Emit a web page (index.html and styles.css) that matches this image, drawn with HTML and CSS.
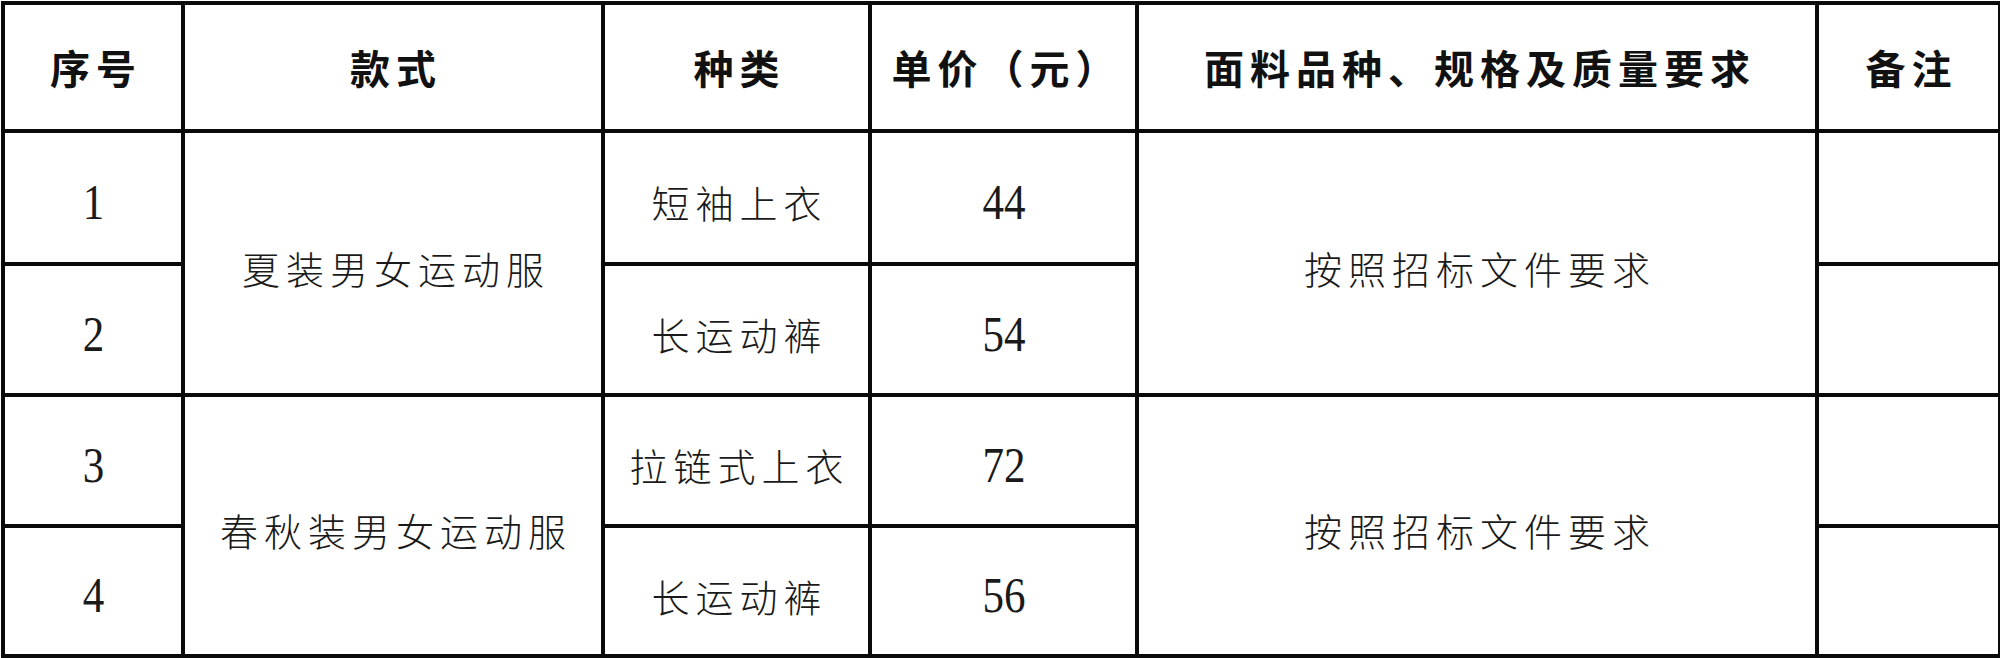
FILE: index.html
```html
<!DOCTYPE html>
<html lang="zh-CN">
<head>
<meta charset="utf-8">
<title>运动服报价表</title>
<link rel="stylesheet" href="styles.css">
</head>
<body>
<table class="sheet">
  <colgroup>
    <col class="c-no">
    <col class="c-style">
    <col class="c-kind">
    <col class="c-price">
    <col class="c-req">
    <col class="c-note">
  </colgroup>
  <thead>
    <tr class="r-head">
      <th>序号</th>
      <th>款式</th>
      <th>种类</th>
      <th>单价（元）</th>
      <th>面料品种、规格及质量要求</th>
      <th>备注</th>
    </tr>
  </thead>
  <tbody>
    <tr class="r-a">
      <td class="num"><span>1</span></td>
      <td rowspan="2" class="cn">夏装男女运动服</td>
      <td class="cn">短袖上衣</td>
      <td class="num"><span>44</span></td>
      <td rowspan="2" class="cn">按照招标文件要求</td>
      <td></td>
    </tr>
    <tr class="r-b">
      <td class="num"><span>2</span></td>
      <td class="cn">长运动裤</td>
      <td class="num"><span>54</span></td>
      <td></td>
    </tr>
    <tr class="r-b">
      <td class="num"><span>3</span></td>
      <td rowspan="2" class="cn">春秋装男女运动服</td>
      <td class="cn">拉链式上衣</td>
      <td class="num"><span>72</span></td>
      <td rowspan="2" class="cn">按照招标文件要求</td>
      <td></td>
    </tr>
    <tr class="r-c">
      <td class="num"><span>4</span></td>
      <td class="cn">长运动裤</td>
      <td class="num"><span>56</span></td>
      <td></td>
    </tr>
  </tbody>
</table>
</body>
</html>
```
FILE: styles.css
```css
html, body {
  margin: 0;
  padding: 0;
  background: #ffffff;
}

body {
  padding: 1px 0 0 1px;
}

.sheet {
  border-collapse: collapse;
  table-layout: fixed;
  width: 1997px;
  border-top: 4px solid #555555;
  border-left: 4px solid #555555;
  border-right: 4px solid #0a0a0a;
  border-bottom: 4px solid #0a0a0a;
}

.c-no { width: 180px; }
.c-style { width: 420px; }
.c-kind { width: 267px; }
.c-price { width: 267px; }
.c-req { width: 680px; }
.c-note { width: 183px; }

.sheet th,
.sheet td {
  border: 4px solid #0a0a0a;
  padding: 8px 0 0 0;
  text-align: center;
  vertical-align: middle;
  color: #1a1a1a;
  white-space: nowrap;
  overflow: hidden;
}

.sheet th {
  font-family: "Noto Sans CJK SC", "Noto Sans", sans-serif;
  font-weight: 700;
  font-size: 40px;
  letter-spacing: 6px;
  text-indent: 6px;
  padding-top: 0;
  color: #111111;
}

.r-head { height: 128px; }
.r-a { height: 133px; }
.r-b { height: 131px; }
.r-c { height: 130px; }

.cn {
  font-family: "Noto Sans CJK SC", "Noto Sans", sans-serif;
  font-weight: 300;
  font-size: 38px;
  letter-spacing: 6px;
  text-indent: 6px;
  color: #2a2a2a;
}

.num {
  font-family: "Liberation Serif", "Times New Roman", serif;
  font-size: 50px;
  color: #2a2a2a;
}

.num span {
  display: inline-block;
  transform: scaleX(0.86);
}
```
